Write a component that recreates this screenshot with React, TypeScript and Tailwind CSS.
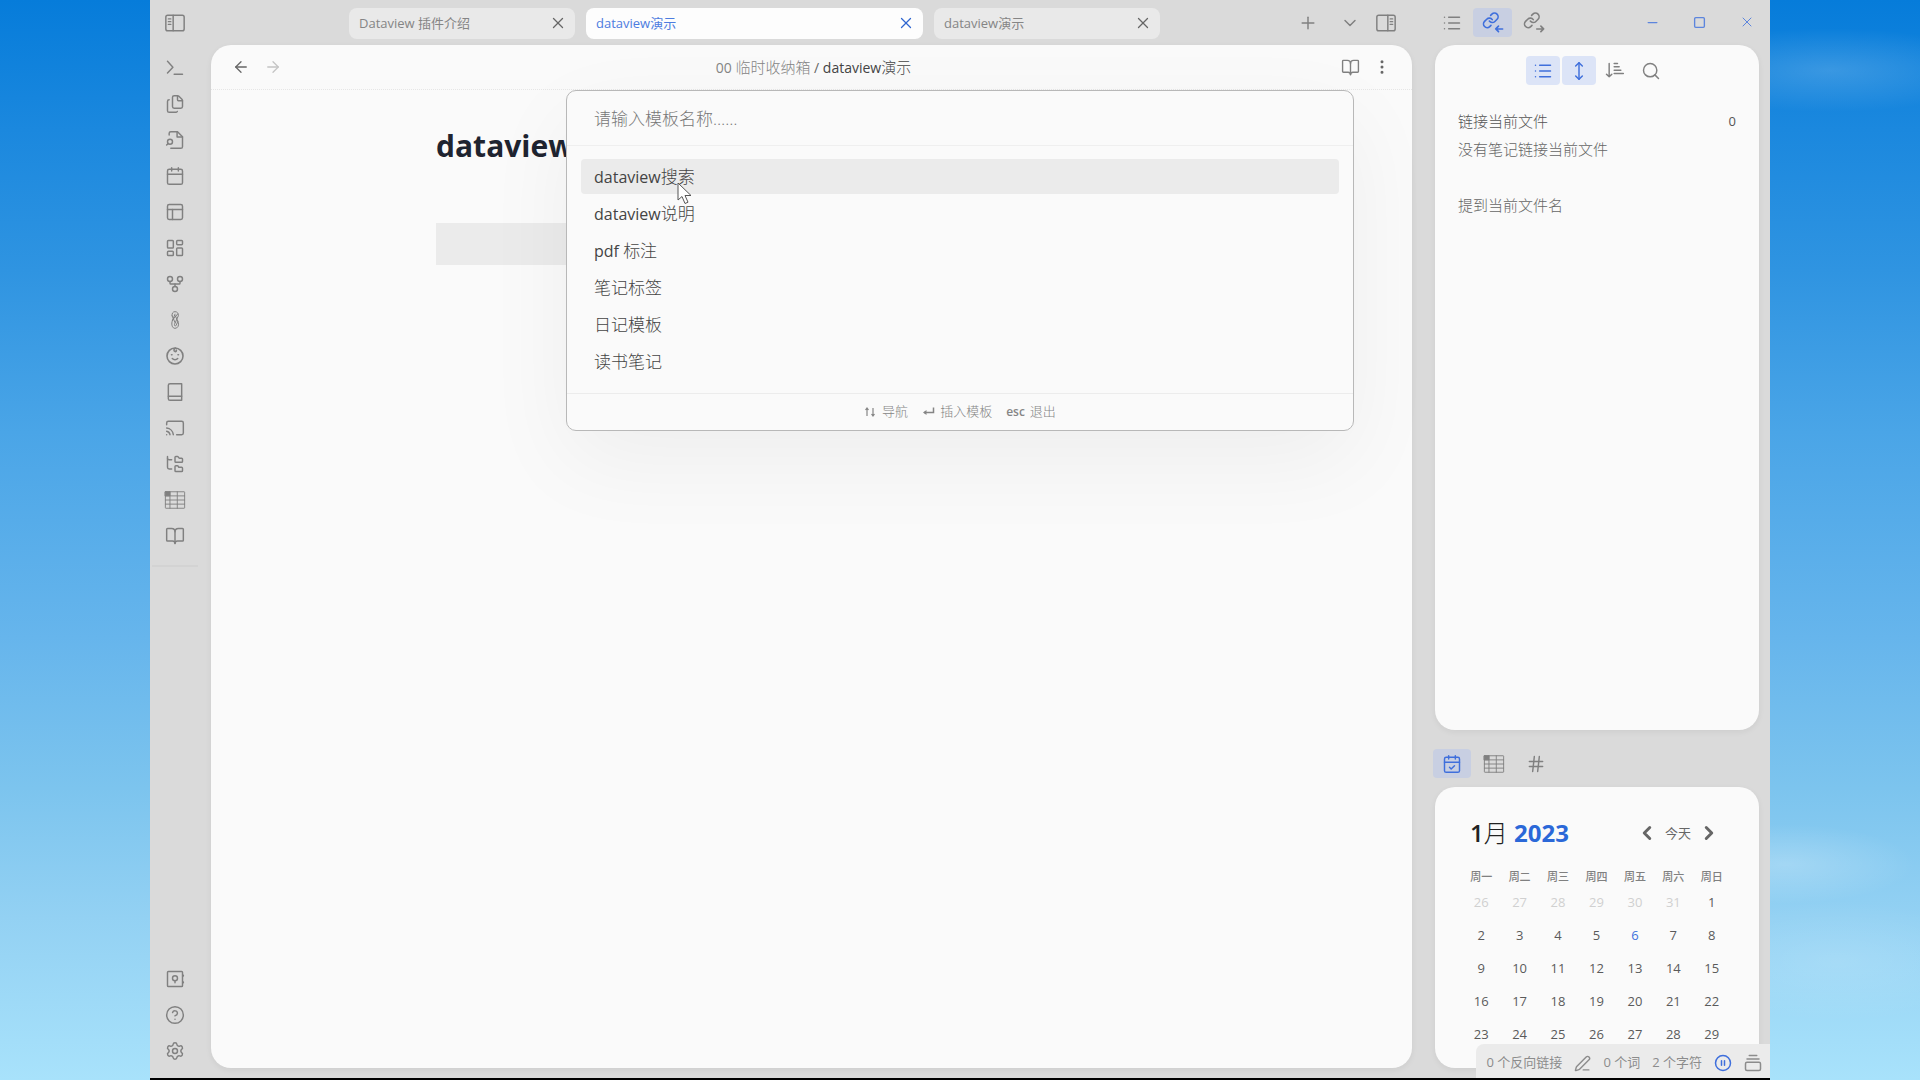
import type { ReactNode } from "react";
import {
  ArrowLeft, ArrowRight, BookOpen, Calendar, CalendarCheck, Cast, ChevronDown, ChevronLeft,
  ChevronRight, CirclePause, CircleQuestionMark, Files, FolderTree, GitFork, Hash, LayoutDashboard, List,
  EllipsisVertical, Minus, MoveVertical, PanelsTopLeft, PenLine, Plus, Search, Settings, Square, X,
} from "lucide-react";

function Svg({ size = 20, sw = 1.75, children }: { size?: number; sw?: number; children: ReactNode }) {
  return (
    <svg width={size} height={size} viewBox="0 0 24 24" fill="none" stroke="currentColor" strokeWidth={sw} strokeLinecap="round" strokeLinejoin="round" aria-hidden="true">
      {children}
    </svg>
  );
}

const SidebarIcon = ({ right = false }: { right?: boolean }) => (
  <Svg size={22} sw={1.6}>
    <g transform={right ? "matrix(-1 0 0 1 24 0)" : undefined}>
      <rect x="2" y="3.5" width="20" height="17" rx="2" />
      <path d="M10 3.5v17M4.8 7.5h2.6M4.8 10.5h2.6M4.8 13.5h2.6" />
    </g>
  </Svg>
);
const PromptIcon = () => <Svg><path d="M3 4l6.5 7L3 18M11 19.5h10" /></Svg>;
const FileLensIcon = () => (
  <Svg>
    <path d="M5 6V4a2 2 0 0 1 2-2h8l6 6v12a2 2 0 0 1-2 2H7" />
    <path d="M14.5 2v6.5H21" />
    <circle cx="6" cy="14" r="3" />
    <path d="M3.8 16.2L2 18" />
  </Svg>
);
const ClipIcon = () => (
  <Svg sw={1.2}>
    <path d="M8.500 7c-.5-3 1-5 3.500-5s4.500 2 4 5l-4.500 10c-.8 2 1.200 3 2 1.200l2-4.700" />
    <path d="M8.500 7l3.500 8M12 5l-3.500 9c-1 4 .5 8 3.500 8s5-3 4-7l-3.500-8M9 12l6-7" />
  </Svg>
);
const FaceIcon = () => (
  <Svg sw={1.9}>
    <circle cx="12" cy="12" r="9.600" />
    <path d="M12.500 2.500c-2 1-2.500 3.500-.5 4.200 1.300.3 2-.7 1.500-1.700M7.800 10.500h.6M15.600 10.500h.6M8.800 15c1.800 1.900 4.600 1.900 6.400 0" />
  </Svg>
);
const BookIcon = () => (
  <Svg>
    <path d="M6 2h14v20H6a2 2 0 0 1-2-2V4a2 2 0 0 1 2-2z" />
    <path d="M4 17h16" />
  </Svg>
);
const TableIcon = () => (
  <Svg size={22} sw={1}>
    <rect x="1.500" y="3" width="21" height="18" rx="0.500" />
    <path d="M1.500 7.500h21M1.500 12h21M1.500 16.500h21M6.500 3v18M14.500 3v18" />
    <rect x="1.500" y="3" width="5" height="4.500" fill="currentColor" />
  </Svg>
);
const VaultIcon = () => (
  <Svg>
    <rect x="3" y="3" width="18" height="18" rx="1" />
    <circle cx="12" cy="11" r="3" />
    <path d="M12 14v2.500M22 7.500v1M22 15.500v1" />
  </Svg>
);
const LinkIcon = ({ out = false }: { out?: boolean }) => (
  <Svg size={22} sw={1.8}>
    <g transform="translate(0 -.5) scale(.8)" strokeWidth="2.200">
      <path d="M10 13a5 5 0 0 0 7.540.54l3-3a5 5 0 0 0-7.070-7.070l-1.720 1.710" />
      <path d="M14 11a5 5 0 0 0-7.540-.54l-3 3a5 5 0 0 0 7.070 7.070l1.710-1.710" />
    </g>
    {out ? <path d="M15 18.500h7.500M19.500 15.500l3 3-3 3" /> : <path d="M22.500 18.500H15M18 15.500l-3 3 3 3" />}
  </Svg>
);
const SortIcon = () => <Svg><path d="M5 3v16M1.800 15.800L5 19l3.200-3.200M11 3h4M11 7h6M11 11h8M11 15h11" /></Svg>;
const StackIcon = () => <Svg size={18} sw={2}><path d="M7 2h10M4 6.500h16" /><rect x="2" y="11" width="20" height="11" rx="2" /></Svg>;

const ribbonTop: [string, ReactNode][] = [
  ["命令面板", <PromptIcon />],
  ["文件", <Files size={20} strokeWidth={1.75} />],
  ["快速切换", <FileLensIcon />],
  ["日历", <Calendar size={20} strokeWidth={1.75} />],
  ["工作区", <PanelsTopLeft size={20} strokeWidth={1.75} />],
  ["看板", <LayoutDashboard size={20} strokeWidth={1.75} />],
  ["关系图谱", <GitFork size={20} strokeWidth={1.75} />],
  ["附件", <ClipIcon />],
  ["表情", <FaceIcon />],
  ["书籍", <BookIcon />],
  ["投屏", <Cast size={20} strokeWidth={1.75} />],
  ["目录树", <FolderTree size={20} strokeWidth={1.75} />],
  ["表格", <TableIcon />],
  ["阅读", <BookOpen size={20} strokeWidth={1.75} />],
];
const ribbonBottom: [string, ReactNode][] = [
  ["打开其他库", <VaultIcon />],
  ["帮助", <CircleQuestionMark size={20} strokeWidth={1.75} />],
  ["设置", <Settings size={20} strokeWidth={1.75} />],
];

function IconButton({ label, className = "", children }: { label: string; className?: string; children: ReactNode }) {
  return (
    <button type="button" aria-label={label} className={`flex shrink-0 items-center justify-center rounded ${className}`}>
      {children}
    </button>
  );
}

function Tab({ title, active = false }: { title: string; active?: boolean }) {
  return (
    <div className={`flex h-[31px] items-center justify-between rounded-lg pr-2 pb-[2px] pl-[10px] ${active ? "w-[337px] bg-[#fdfdfd] text-[#4d7ce0]" : "w-[226px] bg-[#e9e9e9] text-[#858585]"}`}>
      <button type="button" className="text-[13px] leading-5">{title}</button>
      <IconButton label={`关闭 ${title}`} className={active ? "text-[#2f66d0]" : "text-[#666]"}>
        <X size={18} strokeWidth={1.75} />
      </IconButton>
    </div>
  );
}

const templates: [string, string][] = [
  ["dataview", "搜索"], ["dataview", "说明"], ["pdf ", "标注"], ["", "笔记标签"], ["", "日记模板"], ["", "读书笔记"],
];

function TemplatePicker() {
  return (
    <div role="dialog" aria-label="插入模板" className="absolute top-[90px] left-1/2 flex w-[788px] -translate-x-1/2 flex-col rounded-[10px] border border-[#b8b8b8] bg-[#fafafa] shadow-[0_30px_90px_rgba(0,0,0,0.05)]">
      <input
        aria-label="模板名称"
        placeholder="请输入模板名称……"
        className="h-[55px] border-b border-[#efefef] bg-transparent px-[27px] text-[17px] font-light text-[#444] outline-none placeholder:text-[#777]"
      />
      <ul className="flex flex-col gap-[2px] px-[14px] pt-[13px] pb-[14px]">
        {templates.map(([latin, cjk], i) => (
          <li key={cjk}>
            <button type="button" className={`h-[35px] w-full rounded px-[13px] text-left text-[17px] leading-[35px] font-light whitespace-pre text-[#444] ${i === 0 ? "bg-[#ebebeb]" : ""}`}>
              <span className="text-[16px] font-normal">{latin}</span>{cjk}
            </button>
          </li>
        ))}
      </ul>
      <div className="flex h-[37px] items-center justify-center gap-[14px] border-t border-[#ececec] text-[13px] font-light text-[#858585]">
        <span className="flex items-center gap-[5px]">
          <svg width="13" height="12" viewBox="0 0 13 12" fill="none" stroke="currentColor" strokeWidth="1.2" aria-hidden="true">
            <path d="M3 10V2M1.500 4L3 2l1.500 2M9 2v8M7.500 8L9 10l1.500-2" />
          </svg>
          导航
        </span>
        <span className="flex items-center gap-[5px]">
          <svg width="13" height="12" viewBox="0 0 13 12" fill="none" stroke="currentColor" strokeWidth="1.500" aria-hidden="true">
            <path d="M11.500 1.500v5H2" />
            <path d="M4.500 4v5L1 6.500z" fill="currentColor" stroke="none" />
          </svg>
          插入模板
        </span>
        <span><kbd className="mr-[5px] text-[12px] font-semibold [font-family:inherit]">esc</kbd>退出</span>
      </div>
    </div>
  );
}

const weekdays = ["周一", "周二", "周三", "周四", "周五", "周六", "周日"];
const weeks = [
  [26, 27, 28, 29, 30, 31, 1],
  [2, 3, 4, 5, 6, 7, 8],
  [9, 10, 11, 12, 13, 14, 15],
  [16, 17, 18, 19, 20, 21, 22],
  [23, 24, 25, 26, 27, 28, 29],
];

function dayColor(week: number, day: number) {
  if (week === 0 && day > 20) return "text-[#d0d0d0]";
  if (week === 1 && day === 6) return "text-[#3f72dc]";
  return "text-[#5a5a5a]";
}

function MonthCalendar() {
  return (
    <section aria-label="日历" className="shrink-0 rounded-[20px] bg-[#fafafa] pt-7 pr-7 pb-[18px] pl-[27px] shadow-[0_2px_6px_rgba(0,0,0,0.06)]">
      <div className="flex h-9 items-center justify-between pr-[11px] pl-2">
        <h2 className="text-[24px] leading-9">
          <span className="font-semibold text-[#222]">1</span><span className="font-light text-[#222]">月</span>{" "}
          <span className="font-bold text-[#2b68d8]">2023</span>
        </h2>
        <div className="flex items-center gap-[7px] text-[#666]">
          <IconButton label="上个月"><ChevronLeft size={22} strokeWidth={3.200} /></IconButton>
          <button type="button" className="text-[13px] leading-5">今天</button>
          <IconButton label="下个月"><ChevronRight size={22} strokeWidth={3.200} /></IconButton>
        </div>
      </div>
      <table className="mt-[17px] w-full table-fixed border-collapse text-center">
        <thead>
          <tr className="h-[17px] text-[11px] leading-4 text-[#808080]">
            {weekdays.map((d) => <th key={d} className="p-0 font-medium">{d}</th>)}
          </tr>
        </thead>
        <tbody>
          {weeks.map((week, w) => (
            <tr key={w} className="h-[33px] text-[13px] leading-5">
              {week.map((day) => <td key={day} className={`p-0 ${dayColor(w, day)}`}>{day}</td>)}
            </tr>
          ))}
        </tbody>
      </table>
    </section>
  );
}

export default function App() {
  return (
    <div className="flex h-screen w-full overflow-hidden bg-[linear-gradient(180deg,#067cda_0%,#1b88de_12%,#2f94e1_25%,#4aa5e7_40%,#66b5ec_59%,#7cc4ee_73%,#93d1f3_85%,#a8e2fb_100%)] font-['Open_Sans','Noto_Sans_CJK_SC',sans-serif]">
      <div className="w-[150px] shrink-0" />
      <div className="relative flex min-w-0 flex-1 border-b-2 border-black bg-[#dadada] text-[#808080]">
        <nav aria-label="功能区" className="flex w-[61px] shrink-0 flex-col pb-[9px] pl-[2px]">
          <IconButton label="切换左侧栏" className="h-[46px] w-[46px]"><SidebarIcon /></IconButton>
          <div className="flex w-[46px] flex-col border-b-2 border-[#d3d3d3] pt-1 pb-[11px]">
            {ribbonTop.map(([label, icon]) => (
              <IconButton key={label} label={label} className="h-9 w-[46px]">{icon}</IconButton>
            ))}
          </div>
          <div className="mt-auto flex flex-col">
            {ribbonBottom.map(([label, icon]) => (
              <IconButton key={label} label={label} className="h-9 w-[46px]">{icon}</IconButton>
            ))}
          </div>
        </nav>

        <main className="flex min-w-0 flex-1 flex-col pb-[10px]">
          <div className="flex h-[45px] shrink-0 items-start pt-2 pr-[15px] pl-[138px]">
            <div className="flex gap-[11px]">
              <Tab title="Dataview 插件介绍" />
              <Tab title="dataview演示" active />
              <Tab title="dataview演示" />
            </div>
            <div className="ml-auto flex h-[30px] items-center">
              <IconButton label="新标签页" className="mr-[22px]"><Plus size={20} strokeWidth={1.75} /></IconButton>
              <IconButton label="标签页列表" className="mr-[15px]"><ChevronDown size={20} strokeWidth={1.75} /></IconButton>
              <IconButton label="切换右侧栏"><SidebarIcon right /></IconButton>
            </div>
          </div>

          <article className="flex min-h-0 flex-1 flex-col rounded-[20px] bg-[#fafafa] shadow-[0_2px_6px_rgba(0,0,0,0.06)]">
            <header className="flex h-[45px] items-center justify-between border-b border-dotted border-[#e6e6e6] px-5">
              <div className="flex w-[84px] items-center gap-3">
                <IconButton label="后退" className="h-6 w-5 text-[#666]"><ArrowLeft size={18} strokeWidth={1.75} /></IconButton>
                <IconButton label="前进" className="h-6 w-5 text-[#c4c4c4]"><ArrowRight size={18} strokeWidth={1.75} /></IconButton>
              </div>
              <nav aria-label="路径" className="text-[14px] leading-6 whitespace-pre">
                <a href="#folder" className="text-[#858585]">00 <span className="text-[15px] font-light">临时收纳箱</span></a>
                <span className="text-[#666]"> / </span>
                <a href="#note" className="text-[#444]">dataview<span className="text-[15px] font-light">演示</span></a>
              </nav>
              <div className="flex w-20 items-center justify-end gap-3">
                <IconButton label="阅读视图" className="h-6 w-5"><BookOpen size={19} strokeWidth={1.75} /></IconButton>
                <IconButton label="更多选项" className="h-6 w-5 text-[#666]"><EllipsisVertical size={18} strokeWidth={2} /></IconButton>
              </div>
            </header>
            <div className="px-[225px] pt-[35px]">
              <h1 className="text-[30px] leading-[42px] font-bold text-[#1f2430]">dataview演示</h1>
              <div className="mt-14 h-[42px] bg-[#ebebeb]" />
            </div>
          </article>
        </main>

        <aside className="flex w-[358px] shrink-0 flex-col pr-[11px] pb-[10px] pl-[23px]">
          <div className="flex h-[45px] shrink-0 items-start justify-between pt-2">
            <div className="flex h-[29px] gap-[4px]">
              <IconButton label="大纲" className="h-[29px] w-[34px]"><List size={20} strokeWidth={1.75} /></IconButton>
              <IconButton label="反向链接" className="h-[29px] w-[39px] bg-[#c8cfe2] text-[#3f6fdc]"><LinkIcon /></IconButton>
              <IconButton label="出链" className="h-[29px] w-9"><LinkIcon out /></IconButton>
            </div>
            <div className="-mr-[11px] flex h-7 items-center text-[#5c85dd]">
              <IconButton label="最小化" className="h-7 w-[47px]"><Minus size={15} strokeWidth={2} /></IconButton>
              <IconButton label="最大化" className="h-7 w-[47px]"><Square size={13} strokeWidth={2.500} /></IconButton>
              <IconButton label="关闭窗口" className="h-7 w-[47px]"><X size={16} strokeWidth={1.500} /></IconButton>
            </div>
          </div>

          <section aria-label="反向链接" className="min-h-0 flex-1 rounded-[20px] bg-[#fafafa] px-[23px] pt-[11px] text-[15px] shadow-[0_2px_6px_rgba(0,0,0,0.06)]">
            <div className="flex justify-center gap-[2px]">
              <IconButton label="折叠结果" className="h-[29px] w-[34px] bg-[#dce4f7] text-[#3f6fdc]"><List size={20} strokeWidth={1.75} /></IconButton>
              <IconButton label="显示更多上下文" className="h-[29px] w-[34px] bg-[#dce4f7] text-[#3f6fdc]"><MoveVertical size={20} strokeWidth={1.75} /></IconButton>
              <IconButton label="排序" className="h-[29px] w-[34px]"><SortIcon /></IconButton>
              <IconButton label="搜索" className="h-[29px] w-[34px]"><Search size={20} strokeWidth={1.75} /></IconButton>
            </div>
            <h3 className="mt-[22px] flex justify-between leading-7 font-light text-[#555]">
              链接当前文件<span className="text-[13px] font-normal">0</span>
            </h3>
            <p className="leading-7 font-light text-[#666]">没有笔记链接当前文件</p>
            <h3 className="mt-7 leading-7 font-light text-[#666]">提到当前文件名</h3>
          </section>

          <div className="mt-[19px] mb-[9px] flex h-[29px] shrink-0 gap-[3px]">
            <IconButton label="日历" className="-ml-[2px] h-[29px] w-[38px] bg-[#c8cfe2] text-[#3f6fdc]"><CalendarCheck size={20} strokeWidth={1.75} /></IconButton>
            <IconButton label="表格" className="h-[29px] w-[39px]"><TableIcon /></IconButton>
            <IconButton label="标签" className="h-[29px] w-[39px]"><Hash size={20} strokeWidth={1.75} /></IconButton>
          </div>

          <MonthCalendar />
        </aside>

        <footer className="absolute right-0 bottom-0 flex h-[34px] items-center rounded-tl-lg bg-[#ebebeb] pt-1 pr-2 pl-[11px] text-[13px] text-[#8c8c8c]">
          <span>0 个反向链接</span>
          <IconButton label="编辑模式" className="mx-3"><PenLine size={17} strokeWidth={2} /></IconButton>
          <span className="mr-3">0 个词</span>
          <span>2 个字符</span>
          <IconButton label="同步状态" className="mx-3 text-[#3f6fdc]"><CirclePause size={18} strokeWidth={2} /></IconButton>
          <IconButton label="堆叠"><StackIcon /></IconButton>
        </footer>

        <TemplatePicker />
        <svg className="absolute top-[182px] left-[527px]" width="16" height="24" viewBox="0 0 16 24" fill="#fff" stroke="#555" strokeWidth="1" aria-hidden="true">
          <path d="M1 1v17l4-3.500 3 7 3-1.300-3-6.700h6z" />
        </svg>
      </div>
      <div className="w-[150px] shrink-0 bg-[radial-gradient(ellipse_170px_42px_at_40%_6.500%,rgba(255,255,255,0.17),transparent),radial-gradient(ellipse_130px_40px_at_10%_80%,rgba(255,255,255,0.22),transparent),radial-gradient(ellipse_160px_60px_at_45%_89%,rgba(255,255,255,0.13),transparent)]" />
    </div>
  );
}
